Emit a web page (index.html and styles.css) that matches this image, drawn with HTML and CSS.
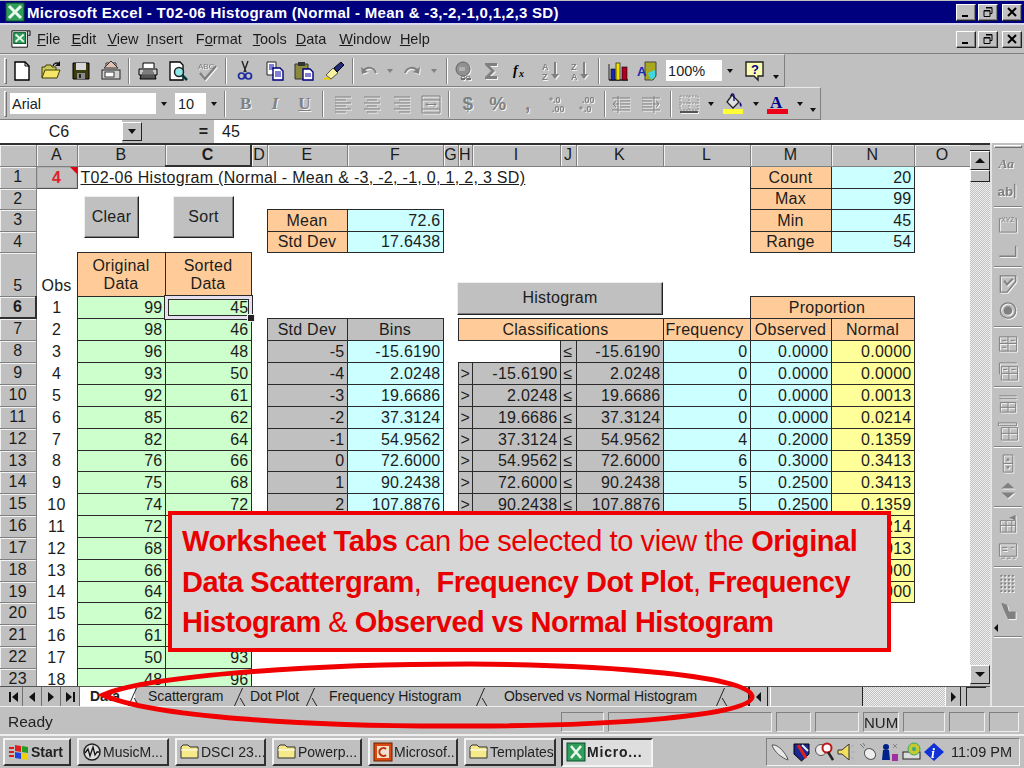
FILE: index.html
```html
<!DOCTYPE html>
<html lang="en">
<head>
<meta charset="utf-8">
<title>Microsoft Excel - T02-06 Histogram</title>
<link rel="stylesheet" href="styles.css">
</head>
<body>
<div class="app">
  <header class="titlebar">
    <svg class="appicon" viewBox="0 0 20 20"><rect x="1" y="1" width="18" height="18" fill="#2f9e5b" stroke="#0b4f2a"/><path d="M4 4l12 12M16 4L4 16" stroke="#e8f8ea" stroke-width="3"/></svg>
    <span class="titletext">Microsoft Excel - T02-06 Histogram (Normal - Mean &amp; -3,-2,-1,0,1,2,3 SD)</span>
    <div class="winbtns">
      <button class="winbtn"><svg viewBox="0 0 14 12"><path d="M3 10h6" stroke="#000" stroke-width="2"/></svg></button>
      <button class="winbtn"><svg viewBox="0 0 14 12"><path d="M5 1.5h6v6H9M3 4.5h6v6H3z" fill="none" stroke="#000"/><path d="M5 2h6M3 5h6" stroke="#000"/></svg></button>
      <button class="winbtn winclose"><svg viewBox="0 0 14 12"><path d="M3 2l8 8M11 2l-8 8" stroke="#000" stroke-width="2"/></svg></button>
    </div>
  </header>

  <nav class="menubar">
    <svg class="docicon" viewBox="0 0 24 22"><path d="M2 2h17v18H2z" fill="#fff" stroke="#000"/><path d="M19 2h3v5h-2" fill="none" stroke="#000"/><rect x="4" y="4" width="13" height="12" fill="#2f9e5b" stroke="#0b4f2a"/><path d="M6 6l9 8M15 6l-9 8" stroke="#e8f8ea" stroke-width="2"/></svg>
    <span class="mi mi-file"><u>F</u>ile</span>
    <span class="mi mi-edit"><u>E</u>dit</span>
    <span class="mi mi-view"><u>V</u>iew</span>
    <span class="mi mi-insert"><u>I</u>nsert</span>
    <span class="mi mi-format">F<u>o</u>rmat</span>
    <span class="mi mi-tools"><u>T</u>ools</span>
    <span class="mi mi-data"><u>D</u>ata</span>
    <span class="mi mi-window"><u>W</u>indow</span>
    <span class="mi mi-help"><u>H</u>elp</span>
    <div class="winbtns">
      <button class="winbtn"><svg viewBox="0 0 14 12"><path d="M3 10h6" stroke="#000" stroke-width="2"/></svg></button>
      <button class="winbtn"><svg viewBox="0 0 14 12"><path d="M5 1.5h6v6H9M3 4.5h6v6H3z" fill="none" stroke="#000"/><path d="M5 2h6M3 5h6" stroke="#000"/></svg></button>
      <button class="winbtn winclose"><svg viewBox="0 0 14 12"><path d="M3 2l8 8M11 2l-8 8" stroke="#000" stroke-width="2"/></svg></button>
    </div>
  </nav>

  <div class="toolrow">
    <div class="toolbar tb-std">
      <i class="grip"></i>
      <span class="tbtn"><svg viewBox="0 0 22 22"><path d="M4 2h10l4 4v14H4z" fill="#fff" stroke="#000" stroke-width="1.4"/><path d="M14 2v4h4" fill="none" stroke="#000"/></svg></span>
      <span class="tbtn"><svg viewBox="0 0 22 22"><path d="M2 18V7h3l1-2h5l1 2h4v3" fill="#c9c95a" stroke="#403c00"/><path d="M2 18l3-8h15l-3 8z" fill="#f5e66a" stroke="#403c00"/><path d="M13 6c1-3 4-4 6-2" fill="none" stroke="#111" stroke-width="1.4"/><path d="M20 1v5h-5z" fill="#111"/></svg></span>
      <span class="tbtn"><svg viewBox="0 0 22 22"><path d="M3 3h16v16H3z" fill="#3c3c10" stroke="#000"/><rect x="6" y="3" width="10" height="7" fill="#d8d8d8"/><rect x="7" y="13" width="8" height="6" fill="#8a8a8a"/><rect x="9" y="14" width="2" height="4" fill="#222"/></svg></span>
      <span class="tbtn"><svg viewBox="0 0 22 22"><path d="M6 8V3h10v5" fill="#eee" stroke="#333"/><path d="M11 1l7 7H4z" fill="#e4c0b0" stroke="#333"/><rect x="2" y="10" width="18" height="9" fill="#d0d0d0" stroke="#222"/><rect x="5" y="12" width="9" height="5" fill="#fff" stroke="#333"/></svg></span>
      <i class="sep"></i>
      <span class="tbtn"><svg viewBox="0 0 22 22"><path d="M6 8V3h11v5" fill="#fff" stroke="#000"/><path d="M2 9h18v6H2z" fill="#c8c8c8" stroke="#000"/><path d="M4 15l-1 4h16l-1-4" fill="#555" stroke="#000"/><path d="M6 11h10M5 13h12" stroke="#333"/></svg></span>
      <span class="tbtn"><svg viewBox="0 0 22 22"><path d="M3 2h10l3 3v15H3z" fill="#fff" stroke="#000" stroke-width="1.3"/><circle cx="12" cy="12" r="4.5" fill="#8fe8e8" stroke="#222" stroke-width="1.5"/><path d="M15 15l5 5" stroke="#003a3a" stroke-width="2.5"/></svg></span>
      <span class="tbtn dis"><svg viewBox="0 0 22 22"><text x="2" y="9" font-size="8" font-family="Liberation Sans" fill="#808080">ABC</text><path d="M4 13l5 6L20 6" fill="none" stroke="#808080" stroke-width="2.4"/></svg></span>
      <i class="sep"></i>
      <span class="tbtn"><svg viewBox="0 0 22 22"><path d="M8 1l4 11M14 1l-4 11" stroke="#222" stroke-width="1.4"/><circle cx="7.5" cy="16" r="3" fill="none" stroke="#1a2aa0" stroke-width="1.7"/><circle cx="14.5" cy="16" r="3" fill="none" stroke="#1a2aa0" stroke-width="1.7"/></svg></span>
      <span class="tbtn"><svg viewBox="0 0 22 22"><path d="M3 2h9v13H3z" fill="#fff" stroke="#222"/><path d="M5 5h5M5 7h5M5 9h5" stroke="#00a"/><path d="M9 8h7l3 3v9H9z" fill="#fff" stroke="#00007a" stroke-width="1.4"/><path d="M11 12h6M11 14h6M11 16h6" stroke="#00a"/></svg></span>
      <span class="tbtn"><svg viewBox="0 0 22 22"><path d="M2 4h13v15H2z" fill="#8a8a3a" stroke="#333"/><rect x="5" y="2" width="7" height="4" fill="#333"/><path d="M10 9h7l3 3v8H10z" fill="#fff" stroke="#00007a" stroke-width="1.4"/><path d="M12 14h6M12 16h6" stroke="#00a"/></svg></span>
      <span class="tbtn"><svg viewBox="0 0 22 22"><path d="M3 15l7-7 5 5-7 6z" fill="#f8f0a0" stroke="#554"/><path d="M11 8l7-6 3 3-7 7z" fill="#222a7a" stroke="#001"/><path d="M1 19l3-1 3 2" stroke="#e8d000" stroke-width="2" fill="none"/></svg></span>
      <i class="sep"></i>
      <span class="tbtn dis narrow"><svg viewBox="0 0 22 22"><path d="M5 11c4-5 11-4 13 2" fill="none" stroke="#808080" stroke-width="2"/><path d="M3 7l1 7 6-2z" fill="#808080"/></svg></span>
      <span class="dd dis"></span>
      <span class="tbtn dis narrow2"><svg viewBox="0 0 22 22"><path d="M17 11c-4-5-11-4-13 2" fill="none" stroke="#808080" stroke-width="2"/><path d="M19 7l-1 7-6-2z" fill="#808080"/></svg></span>
      <span class="dd dis"></span>
      <i class="sep"></i>
      <span class="tbtn dis narrow2"><svg viewBox="0 0 22 22"><circle cx="10" cy="9" r="7" fill="#909090" stroke="#666"/><path d="M6 7h6v4H6z" fill="#b0b0b0"/><path d="M8 19h4M14 19h4" stroke="#707070" stroke-width="2"/><circle cx="10" cy="18" r="2" fill="none" stroke="#707070"/><circle cx="15" cy="18" r="2" fill="none" stroke="#707070"/></svg></span>
      <span class="tbtn dis"><svg viewBox="0 0 22 22"><path d="M5 3h12v3H10l5 5-5 5h7v3H5v-2l6-6-6-6z" fill="#808080"/></svg></span>
      <span class="tbtn"><svg viewBox="0 0 22 22"><text x="3" y="15" font-size="14" font-weight="700" font-style="italic" font-family="Liberation Serif" fill="#000">f</text><text x="9" y="17" font-size="10" font-weight="700" font-style="italic" font-family="Liberation Serif" fill="#000">x</text></svg></span>
      <span class="tbtn dis"><svg viewBox="0 0 22 22"><text x="2" y="10" font-size="9" font-weight="700" font-family="Liberation Sans" fill="#808080">A</text><text x="2" y="20" font-size="9" font-weight="700" font-family="Liberation Sans" fill="#808080">Z</text><path d="M15 2v15" stroke="#808080" stroke-width="2"/><path d="M11 14h8l-4 5z" fill="#808080"/></svg></span>
      <span class="tbtn dis"><svg viewBox="0 0 22 22"><text x="2" y="10" font-size="9" font-weight="700" font-family="Liberation Sans" fill="#808080">Z</text><text x="2" y="20" font-size="9" font-weight="700" font-family="Liberation Sans" fill="#808080">A</text><path d="M15 2v15" stroke="#808080" stroke-width="2"/><path d="M11 14h8l-4 5z" fill="#808080"/></svg></span>
      <i class="sep"></i>
      <span class="tbtn"><svg viewBox="0 0 22 22"><path d="M2 20h19" stroke="#222" stroke-width="1.5"/><path d="M2 4v16" stroke="#222"/><rect x="4" y="9" width="4" height="11" fill="#1a2ab0" stroke="#000" stroke-width=".6"/><rect x="9" y="3" width="4" height="17" fill="#f0e000" stroke="#000" stroke-width=".6"/><rect x="15" y="7" width="5" height="13" fill="#b00020" stroke="#000" stroke-width=".6"/></svg></span>
      <span class="tbtn"><svg viewBox="0 0 22 22"><path d="M9 2h11v14l-3 4H9z" fill="#a8a820" stroke="#444"/><path d="M12 13l7-3v7l-4 3z" fill="#3fd8e0"/><text x="1" y="16" font-size="13" font-weight="700" font-family="Liberation Sans" fill="#1a2ab0">A</text></svg></span>
      <span class="combo combo-zoom">100%<b class="cbtn"></b></span>
      <span class="tbtn helpbtn"><svg viewBox="0 0 22 22"><path d="M2 2h17v14h-5v4l-4-4H2z" fill="#fdfcb0" stroke="#222" stroke-width="1.4"/><text x="7" y="14" font-size="13" font-weight="700" font-family="Liberation Sans" fill="#00008a">?</text></svg></span>
      <span class="more"></span>
    </div>
  </div>

  <div class="toolrow">
    <div class="toolbar tb-fmt">
      <i class="grip"></i>
      <span class="combo combo-font">Arial<b class="cbtn"></b></span>
      <span class="combo combo-size">10<b class="cbtn"></b></span>
      <i class="sep sep-f"></i>
      <span class="tbtn dis gl gl-b">B</span>
      <span class="tbtn dis gl gl-i">I</span>
      <span class="tbtn dis gl gl-u">U</span>
      <i class="sep sep-w"></i>
      <span class="tbtn dis"><svg viewBox="0 0 22 22"><path d="M3 4h16M3 7h11M3 10h16M3 13h11M3 16h16M3 19h11" stroke="#808080"/></svg></span>
      <span class="tbtn dis"><svg viewBox="0 0 22 22"><path d="M3 4h16M6 7h10M3 10h16M6 13h10M3 16h16M6 19h10" stroke="#808080"/></svg></span>
      <span class="tbtn dis"><svg viewBox="0 0 22 22"><path d="M3 4h16M8 7h11M3 10h16M8 13h11M3 16h16M8 19h11" stroke="#808080"/></svg></span>
      <span class="tbtn dis"><svg viewBox="0 0 22 22"><path d="M2 3h18v17H2zM2 7h18M2 16h18" fill="none" stroke="#808080"/><path d="M6 11.5h10M6 11.5l2-2M6 11.5l2 2M16 11.5l-2-2M16 11.5l-2 2" stroke="#808080"/></svg></span>
      <i class="sep sep-n"></i>
      <span class="tbtn wide dis gl gl-m">$</span>
      <span class="tbtn wide dis gl gl-m">%</span>
      <span class="tbtn wide dis gl gl-m">,</span>
      <span class="tbtn wide dis"><svg viewBox="0 0 22 22"><text x="6" y="10" font-size="9" font-weight="700" font-family="Liberation Sans" fill="#808080">.0</text><text x="5" y="19" font-size="9" font-weight="700" font-family="Liberation Sans" fill="#808080">.00</text><path d="M2 6h4M4 4v4" stroke="#808080"/></svg></span>
      <span class="tbtn wide dis"><svg viewBox="0 0 22 22"><text x="5" y="10" font-size="9" font-weight="700" font-family="Liberation Sans" fill="#808080">.00</text><text x="7" y="19" font-size="9" font-weight="700" font-family="Liberation Sans" fill="#808080">.0</text><path d="M2 15h4M4 13v4" stroke="#808080"/></svg></span>
      <i class="sep sep-s"></i>
      <span class="tbtn dis"><svg viewBox="0 0 22 22"><path d="M2 5h18M10 8h10M10 11h10M10 14h10M2 17h18" stroke="#808080"/><path d="M9 11H3M3 11l3-3M3 11l3 3M8 3v17" fill="none" stroke="#808080"/></svg></span>
      <span class="tbtn dis"><svg viewBox="0 0 22 22"><path d="M2 5h18M2 8h10M2 11h10M2 14h10M2 17h18" stroke="#808080"/><path d="M13 11h6M19 11l-3-3M19 11l-3 3M14 3v17" fill="none" stroke="#808080"/></svg></span>
      <i class="sep sep-b"></i>
      <span class="tbtn dis"><svg viewBox="0 0 22 22"><path d="M2 3h18v14H2zM11 3v14M2 10h18" fill="none" stroke="#909090" stroke-dasharray="2 1"/><path d="M2 19h18" stroke="#555" stroke-width="2"/></svg></span>
      <span class="dd"></span>
      <span class="tbtn"><svg viewBox="0 0 22 22"><path d="M9 2l7 7-6 6-6-6z" fill="#e0e0e0" stroke="#222" stroke-width="1.3"/><path d="M8 3c0-3 3-3 3 0v5" fill="none" stroke="#00007a" stroke-width="1.2"/><path d="M17 9c2 2 2 4 1 5-1-1-2-3-1-5z" fill="#00007a"/><rect x="0" y="16" width="20" height="5" fill="#ffff33"/></svg></span>
      <span class="dd"></span>
      <span class="tbtn"><svg viewBox="0 0 22 22"><text x="3" y="15" font-size="17" font-weight="700" font-family="Liberation Serif" fill="#00008a">A</text><rect x="0" y="16" width="21" height="5" fill="#f00018"/></svg></span>
      <span class="dd"></span>
      <span class="more more-end"></span>
    </div>
  </div>

  <div class="formula">
    <div class="namebox">C6</div>
    <b class="namedrop"></b>
    <div class="fx-eq">=</div>
    <div class="fx-input">45</div>
  </div>

  <div class="work">
    <div class="leftcol">
      <div class="sheetrow">
        <div class="sheetclip">
          <table class="sheet">
            <colgroup>
              <col class="c-rh"><col class="c-a"><col class="c-b"><col class="c-c"><col class="c-d"><col class="c-e"><col class="c-f"><col class="c-g"><col class="c-h"><col class="c-i"><col class="c-j"><col class="c-k"><col class="c-l"><col class="c-m"><col class="c-n"><col class="c-o">
            </colgroup>
            <thead>
              <tr class="hd"><th></th><th>A</th><th>B</th><th class="act">C</th><th>D</th><th>E</th><th>F</th><th>G</th><th>H</th><th>I</th><th>J</th><th>K</th><th>L</th><th>M</th><th>N</th><th>O</th></tr>
            </thead>
            <tbody>
              <tr class="h22"><th>1</th><td class="note">4</td><td colspan="11" class="ttl"><u>T02-06 Histogram (Normal - Mean &amp; -3, -2, -1, 0, 1, 2, 3 SD)</u></td><td class="or c">Count</td><td class="cy r">20</td><td></td></tr>
              <tr class="h21"><th>2</th><td colspan="12"></td><td class="or c">Max</td><td class="cy r">99</td><td></td></tr>
              <tr class="h22"><th>3</th><td colspan="4"></td><td class="or c">Mean</td><td class="cy r">72.6</td><td colspan="6"></td><td class="or c">Min</td><td class="cy r">45</td><td></td></tr>
              <tr class="h21"><th>4</th><td colspan="4"></td><td class="or c">Std Dev</td><td class="cy r">17.6438</td><td colspan="6"></td><td class="or c">Range</td><td class="cy r">54</td><td></td></tr>
              <tr class="h44"><th class="bt">5</th><td class="c bt">Obs</td><td class="or c">Original<br>Data</td><td class="or c">Sorted<br>Data</td></tr>
              <tr class="h22"><th class="act">6</th><td class="c">1</td><td class="gr r">99</td><td class="gr r">45</td><td colspan="9"></td><td colspan="2" class="or c pr12">Proportion</td></tr>
              <tr class="h22"><th>7</th><td class="c">2</td><td class="gr r">98</td><td class="gr r">46</td><td></td><td class="gy c">Std Dev</td><td class="gy c">Bins</td><td></td><td colspan="4" class="or c pr12">Classifications</td><td class="or c pr5">Frequency</td><td class="or c">Observed</td><td class="or c">Normal</td></tr>
              <tr class="h22"><th>8</th><td class="c">3</td><td class="gr r">96</td><td class="gr r">48</td><td></td><td class="gy r">-5</td><td class="cy r">-15.6190</td><td></td><td colspan="2"></td><td class="gy c">≤</td><td class="gy r">-15.6190</td><td class="cy r">0</td><td class="cy r">0.0000</td><td class="yl r">0.0000</td></tr>
              <tr class="h22"><th>9</th><td class="c">4</td><td class="gr r">93</td><td class="gr r">50</td><td></td><td class="gy r">-4</td><td class="cy r">2.0248</td><td></td><td class="gy c">&gt;</td><td class="gy r">-15.6190</td><td class="gy c">≤</td><td class="gy r">2.0248</td><td class="cy r">0</td><td class="cy r">0.0000</td><td class="yl r">0.0000</td></tr>
              <tr class="h22"><th>10</th><td class="c">5</td><td class="gr r">92</td><td class="gr r">61</td><td></td><td class="gy r">-3</td><td class="cy r">19.6686</td><td></td><td class="gy c">&gt;</td><td class="gy r">2.0248</td><td class="gy c">≤</td><td class="gy r">19.6686</td><td class="cy r">0</td><td class="cy r">0.0000</td><td class="yl r">0.0013</td></tr>
              <tr class="h22"><th>11</th><td class="c">6</td><td class="gr r">85</td><td class="gr r">62</td><td></td><td class="gy r">-2</td><td class="cy r">37.3124</td><td></td><td class="gy c">&gt;</td><td class="gy r">19.6686</td><td class="gy c">≤</td><td class="gy r">37.3124</td><td class="cy r">0</td><td class="cy r">0.0000</td><td class="yl r">0.0214</td></tr>
              <tr class="h22"><th>12</th><td class="c">7</td><td class="gr r">82</td><td class="gr r">64</td><td></td><td class="gy r">-1</td><td class="cy r">54.9562</td><td></td><td class="gy c">&gt;</td><td class="gy r">37.3124</td><td class="gy c">≤</td><td class="gy r">54.9562</td><td class="cy r">4</td><td class="cy r">0.2000</td><td class="yl r">0.1359</td></tr>
              <tr class="h21"><th>13</th><td class="c">8</td><td class="gr r">76</td><td class="gr r">66</td><td></td><td class="gy r">0</td><td class="cy r">72.6000</td><td></td><td class="gy c">&gt;</td><td class="gy r">54.9562</td><td class="gy c">≤</td><td class="gy r">72.6000</td><td class="cy r">6</td><td class="cy r">0.3000</td><td class="yl r">0.3413</td></tr>
              <tr class="h22"><th>14</th><td class="c">9</td><td class="gr r">75</td><td class="gr r">68</td><td></td><td class="gy r">1</td><td class="cy r">90.2438</td><td></td><td class="gy c">&gt;</td><td class="gy r">72.6000</td><td class="gy c">≤</td><td class="gy r">90.2438</td><td class="cy r">5</td><td class="cy r">0.2500</td><td class="yl r">0.3413</td></tr>
              <tr class="h22"><th>15</th><td class="c">10</td><td class="gr r">74</td><td class="gr r">72</td><td></td><td class="gy r">2</td><td class="cy r">107.8876</td><td></td><td class="gy c">&gt;</td><td class="gy r">90.2438</td><td class="gy c">≤</td><td class="gy r">107.8876</td><td class="cy r">5</td><td class="cy r">0.2500</td><td class="yl r">0.1359</td></tr>
              <tr class="h22"><th>16</th><td class="c">11</td><td class="gr r">72</td><td class="gr r"></td><td></td><td class="gy"></td><td class="cy"></td><td></td><td class="gy"></td><td class="gy"></td><td class="gy"></td><td class="gy"></td><td class="cy"></td><td class="cy"></td><td class="yl r">0.0214</td></tr>
              <tr class="h22"><th>17</th><td class="c">12</td><td class="gr r">68</td><td class="gr r"></td><td></td><td class="gy"></td><td class="cy"></td><td></td><td class="gy"></td><td class="gy"></td><td class="gy"></td><td class="gy"></td><td class="cy"></td><td class="cy"></td><td class="yl r">0.0013</td></tr>
              <tr class="h22"><th>18</th><td class="c">13</td><td class="gr r">66</td><td class="gr r"></td><td></td><td class="gy"></td><td class="cy"></td><td></td><td class="gy"></td><td class="gy"></td><td class="gy"></td><td class="gy"></td><td class="cy"></td><td class="cy"></td><td class="yl r">0.0000</td></tr>
              <tr class="h21"><th>19</th><td class="c">14</td><td class="gr r">64</td><td class="gr r"></td><td></td><td></td><td></td><td></td><td class="gy"></td><td class="gy"></td><td colspan="2"></td><td class="cy"></td><td class="cy"></td><td class="yl r">0.0000</td></tr>
              <tr class="h22"><th>20</th><td class="c">15</td><td class="gr r">62</td><td class="gr r"></td></tr>
              <tr class="h22"><th>21</th><td class="c">16</td><td class="gr r">61</td><td class="gr r"></td></tr>
              <tr class="h22"><th>22</th><td class="c">17</td><td class="gr r">50</td><td class="gr r">93</td></tr>
              <tr class="h22"><th>23</th><td class="c">18</td><td class="gr r">48</td><td class="gr r">96</td></tr>
            </tbody>
          </table>
          <div class="sel"></div>
          <button class="xlbtn xl-clear">Clear</button>
          <button class="xlbtn xl-sort">Sort</button>
          <button class="xlbtn xl-hist">Histogram</button>
        </div>
        <div class="vscroll">
          <i class="split"></i>
          <b class="sbtn sbtn-up"></b>
          <i class="sthumb"></i>
          <i class="strack"></i>
          <b class="sbtn sbtn-down"></b>
        </div>
      </div>
      <div class="tabbar">
        <span class="nav nav-first"></span><span class="nav nav-prev"></span><span class="nav nav-next"></span><span class="nav nav-last"></span>
        <span class="tab tab-data">Data</span>
        <span class="tab tab-sc">Scattergram</span>
        <span class="tab tab-dot">Dot Plot</span>
        <span class="tab tab-fr">Frequency Histogram</span>
        <span class="tab tab-ob">Observed vs Normal Histogram</span>
        <div class="hscroll">
          <b class="hbtn hbtn-l"></b>
          <i class="hthumb"></i>
          <i class="htrack"></i>
          <b class="hbtn hbtn-r"></b>
        </div>
        <i class="corner"></i>
      </div>
    </div>
    <aside class="toolbox">
      <i class="vgrip"></i>
      <span class="vb dis"><svg viewBox="0 0 22 22"><text x="1" y="16" font-size="14" font-style="italic" font-weight="700" font-family="Liberation Serif" fill="#808080">Aa</text></svg></span>
      <span class="vb dis"><svg viewBox="0 0 22 22"><text x="0" y="17" font-size="14" font-family="Liberation Sans" font-weight="700" fill="#808080">ab</text><path d="M18 4v15" stroke="#808080" stroke-width="1.5"/></svg></span>
      <i class="vsep"></i>
      <span class="vb dis"><svg viewBox="0 0 22 22"><path d="M2 6v14h18V6h-2M2 6h2" fill="none" stroke="#808080"/><text x="4" y="9" font-size="7" font-family="Liberation Sans" fill="#808080">XYZ</text></svg></span>
      <span class="vb dis"><svg viewBox="0 0 22 22"><path d="M2 17h17V6" fill="none" stroke="#808080" stroke-width="1.5"/></svg></span>
      <i class="vsep"></i>
      <span class="vb dis"><svg viewBox="0 0 22 22"><path d="M3 3h16v6l-9 11H3z" fill="none" stroke="#808080" stroke-width="1.5"/><path d="M7 8l3 4 6-6" fill="none" stroke="#808080" stroke-width="2"/></svg></span>
      <span class="vb dis"><svg viewBox="0 0 22 22"><circle cx="11" cy="11" r="8" fill="none" stroke="#808080" stroke-width="1.5"/><circle cx="11" cy="11" r="4.5" fill="#808080"/></svg></span>
      <i class="vsep"></i>
      <span class="vb dis"><svg viewBox="0 0 22 22"><path d="M2 4h18v15H2zM11 4v15M2 11h18M5 8h4M14 8h4M5 15h4" fill="none" stroke="#808080"/></svg></span>
      <span class="vb dis"><svg viewBox="0 0 22 22"><path d="M2 3h18M4 7h17v14H4zM12 7v14M4 14h17M6 10h4M15 10h4" fill="none" stroke="#808080"/><path d="M2 3v12" stroke="#808080"/></svg></span>
      <i class="vsep"></i>
      <span class="vb dis"><svg viewBox="0 0 22 22"><path d="M2 3h18M2 6h18M3 10h16v10H3zM11 10v10M3 15h16" fill="none" stroke="#808080"/></svg></span>
      <span class="vb dis"><svg viewBox="0 0 22 22"><path d="M1 3h19v3H1zM4 8h17v13H4zM12 8v13M4 14h17" fill="none" stroke="#808080"/></svg></span>
      <i class="vsep"></i>
      <span class="vb dis"><svg viewBox="0 0 22 22"><path d="M6 2h10v18H6zM6 11h10" fill="none" stroke="#808080"/><path d="M9 8l2-3 2 3zM9 14h4l-2 3z" fill="#808080"/></svg></span>
      <span class="vb dis"><svg viewBox="0 0 22 22"><path d="M4 9l7-6 7 6zM4 13h14l-7 6z" fill="#808080"/></svg></span>
      <i class="vsep"></i>
      <span class="vb dis"><svg viewBox="0 0 22 22"><path d="M3 8h16v12H3zM3 13h16M9 8v12M15 8v12" fill="none" stroke="#808080"/><path d="M12 5l7-3v6z" fill="#808080"/></svg></span>
      <span class="vb dis"><svg viewBox="0 0 22 22"><path d="M2 4h18v13H2zM4 19h4M10 19h4M16 19h3M5 8h5M5 11h5M14 8h3" fill="none" stroke="#808080"/></svg></span>
      <i class="vsep"></i>
      <span class="vb dis"><svg viewBox="0 0 22 22"><path d="M3 3h16M3 7h16M3 11h16M3 15h16M3 19h16" stroke="#808080" stroke-width="2" stroke-dasharray="2 2"/></svg></span>
      <span class="vb dis"><svg viewBox="0 0 22 22"><path d="M4 3l6 2 2 7h7v8h-8L6 9z" fill="#808080"/></svg></span>
      <span class="vmore"></span>
      <i class="vsep"></i>
    </aside>
  </div>

  <div class="statusbar">
    <span class="ready">Ready</span>
    <span class="pn p1"></span><span class="pn p2"></span><span class="pn p3"></span><span class="pn p4"></span><span class="pn p5">NUM</span><span class="pn p6"></span><span class="pn p7"></span><span class="pn p8"></span>
  </div>

  <footer class="taskbar">
    <span class="tk tk-start"><svg viewBox="0 0 22 20"><path d="M7 3l6 1v6l-6-1z" fill="#e02020"/><path d="M14 4l6 1v6l-6-1z" fill="#20a020"/><path d="M7 10l6 1v6l-6-1z" fill="#2040e0"/><path d="M14 11l6 1v6l-6-1z" fill="#f0d000"/><path d="M1 6h5M1 10h5M1 14h5" stroke="#d02020" stroke-width="2"/></svg><b>Start</b></span>
    <span class="tk tk-a"><svg viewBox="0 0 20 20"><circle cx="10" cy="10" r="8" fill="#ddd" stroke="#222" stroke-width="1.5"/><path d="M3 11l3-4 2 7 3-9 2 8 2-3h2" fill="none" stroke="#111" stroke-width="1.3"/></svg>MusicM...</span>
    <span class="tk tk-b"><svg viewBox="0 0 20 20"><path d="M1 16V5l2-2h5l2 2h8v11z" fill="#f5e98a" stroke="#333"/><path d="M1 8h17" stroke="#fff"/></svg>DSCI 23...</span>
    <span class="tk tk-c"><svg viewBox="0 0 20 20"><path d="M1 16V5l2-2h5l2 2h8v11z" fill="#f5e98a" stroke="#333"/><path d="M1 8h17" stroke="#fff"/></svg>Powerp...</span>
    <span class="tk tk-d"><svg viewBox="0 0 20 20"><rect x="1" y="1" width="18" height="18" fill="#d84a10" stroke="#6a2000"/><rect x="4" y="4" width="12" height="12" fill="#f4e0d0"/><path d="M13 7a4 4 0 1 0 0 6" fill="none" stroke="#c03000" stroke-width="2"/></svg>Microsof...</span>
    <span class="tk tk-e"><svg viewBox="0 0 20 20"><path d="M1 16V5l2-2h5l2 2h8v11z" fill="#f5e98a" stroke="#333"/><path d="M1 8h17" stroke="#fff"/></svg>Templates</span>
    <span class="tk tk-f"><svg viewBox="0 0 20 20"><rect x="1" y="1" width="18" height="18" fill="#2f9e5b" stroke="#0b4f2a"/><path d="M5 4l10 12M15 4L5 16" stroke="#e8f8ea" stroke-width="2.6"/></svg><b>Micro...</b></span>
    <div class="tray">
      <svg viewBox="0 0 20 20"><path d="M2 3c5-1 11 5 15 12l1 3c-6-2-14-8-16-15z" fill="#e8e8e8" stroke="#555"/></svg>
      <svg viewBox="0 0 20 20"><path d="M2 2h15v10l-7.500 7L2 12z" fill="#1a2a90" stroke="#001"/><path d="M6 3l8 13" stroke="#e02020" stroke-width="3"/><path d="M10 3l6 6" stroke="#eee" stroke-width="2"/></svg>
      <svg viewBox="0 0 20 20"><circle cx="7" cy="8" r="5.500" fill="#eee" stroke="#555"/><circle cx="13" cy="6" r="4.500" fill="#fff" stroke="#c01818" stroke-width="2"/><path d="M14 10l5 8" stroke="#222" stroke-width="2.500"/></svg>
      <svg viewBox="0 0 20 20"><path d="M2 8h4l7-6v16l-7-6H2z" fill="#f4e060" stroke="#333"/><path d="M15 5l3-2M15 10h4M15 15l3 2" stroke="#aaa"/></svg>
      <svg viewBox="0 0 20 20"><ellipse cx="12" cy="12" rx="6" ry="5" transform="rotate(40 12 12)" fill="#eee" stroke="#555"/><path d="M2 2l4 4M5 1l2 3" stroke="#777"/></svg>
      <svg viewBox="0 0 20 20"><circle cx="6" cy="5" r="3" fill="#00208a"/><path d="M3 8h6l1 10H2z" fill="#00208a"/><path d="M13 2l4 4M17 2l-4 4" stroke="#888"/><rect x="12" y="12" width="6" height="7" fill="#a030a0"/></svg>
      <svg viewBox="0 0 20 20"><rect x="1" y="10" width="17" height="7" fill="#ddd" stroke="#222"/><circle cx="12" cy="7" r="6" fill="#c8c830" stroke="#3a6"/><circle cx="12" cy="7" r="2" fill="#3a8"/></svg>
      <svg viewBox="0 0 20 20"><path d="M0 10l10-9 10 9-10 9z" fill="#1030d8"/><text x="7" y="16" font-size="14" font-weight="700" font-style="italic" font-family="Liberation Serif" fill="#fff">i</text></svg>
      <span class="clock">11:09 PM</span>
    </div>
  </footer>

  <div class="callout">
    <p><b>Worksheet Tabs</b> can be selected to view the <b>Original</b></p>
    <p class="tight"><b>Data Scattergram</b>,&nbsp; <b>Frequency Dot Plot</b>, <b>Frequency</b></p>
    <p class="tight"><b>Histogram</b> &amp; <b>Observed vs Normal Histogram</b></p>
  </div>
  <svg class="ring" viewBox="0 0 1024 768"><path d="M103 695C140 678 290 664 470 664C610 665 753 676 752 697C751 716 610 726 470 726C300 727 150 716 103 695Z" fill="none" stroke="#f00000" stroke-width="5"/></svg>
</div>
</body>
</html>
```
FILE: styles.css
```css
* { box-sizing: border-box; }
html, body { margin: 0; padding: 0; }
body { width: 1024px; height: 768px; overflow: hidden; background: #c0c0c0; font-family: "Liberation Sans", Arial, sans-serif; font-size: 16px; color: #1c1c1c; }
button { font-family: inherit; padding: 0; margin: 0; }
svg { display: block; }
.app { position: relative; width: 1024px; height: 768px; display: flex; flex-direction: column; filter: blur(.3px); }

/* title bar */
.titlebar { height: 25px; flex: none; background: #00007f; border-bottom: 2px solid #d8d8ee; border-top: 1px solid #c0c0c0; display: flex; align-items: center; padding-left: 5px; }
.appicon { width: 20px; height: 20px; flex: none; }
.titletext { margin-left: 2px; color: #fff; font-weight: 700; font-size: 15px; letter-spacing: .3px; white-space: nowrap; }
.winbtns { margin-left: auto; margin-right: 2px; display: flex; gap: 2px; }
.winbtn { width: 20px; height: 17px; background: #c0c0c0; border: 1px solid; border-color: #fff #222 #222 #fff; box-shadow: inset -1px -1px 0 #808080; display: flex; align-items: center; justify-content: center; }
.winbtn svg { width: 14px; height: 12px; }
.winbtn.winclose { margin-left: 2px; }

/* menu */
.menubar { height: 29px; flex: none; display: flex; align-items: center; padding-left: 10px; font-size: 14.5px; border-bottom: 1px solid #808080; position: relative; }
.docicon { width: 22px; height: 20px; flex: none; }
.mi { color: #1c1c1c; white-space: nowrap; }
.mi-file { margin-left: 5px; }
.mi-edit { margin-left: 11px; }
.mi-view { margin-left: 11px; }
.mi-insert { margin-left: 8px; }
.mi-format { margin-left: 13px; }
.mi-tools { margin-left: 11px; }
.mi-data { margin-left: 9px; }
.mi-window { margin-left: 13px; }
.mi-help { margin-left: 9px; }

/* toolbars */
.toolrow { height: 33px; flex: none; background: #c0c0c0; }
.toolbar { height: 33px; display: flex; align-items: center; padding-left: 4px; background: #c0c0c0; border-top: 1px solid #e8e8e8; border-right: 1px solid #808080; border-bottom: 1px solid #808080; }
.tb-std { width: 785px; }
.tb-fmt { width: 821px; }
.grip { flex: none; width: 3px; height: 26px; background: #c0c0c0; border: 1px solid; border-color: #fff #707070 #707070 #fff; }
.tbtn { flex: none; width: 29.6px; height: 24px; display: flex; align-items: center; justify-content: center; }
.tbtn svg { width: 22px; height: 22px; }
.narrow { width: 24px; }
.narrow2 { width: 26px; }
.helpbtn { width: 36px; }
.dis svg { filter: drop-shadow(1px 1px 0 #f4f4f4); }
.sep { flex: none; width: 2px; height: 26px; margin: 0 3px; border-left: 1px solid #808080; border-right: 1px solid #fff; }
.sep-f { margin: 0 5px 0 3px; }
.sep-w { margin: 0 4px 0 3px; }
.sep-n { margin: 0 3px 0 2px; }
.sep-s { margin: 0 1px; }
.sep-b { margin: 0 3px 0 4px; }
.dd { flex: none; width: 18px; display: flex; justify-content: center; }
.dd::before { content: ""; border: 3.5px solid transparent; border-top: 4px solid #111; border-bottom: 0; }
.dd.dis::before { border-top-color: #808080; }
.tb-fmt .dd { width: 15px; }
.more { flex: none; width: 8px; height: 10px; margin-top: 10px; position: relative; }
.more::before { content: ""; position: absolute; left: 0; top: 4px; border: 3.5px solid transparent; border-top: 4px solid #111; border-bottom: 0; }
.more-end { margin-left: 2px; }
.combo { flex: none; background: #fff; height: 21px; display: flex; align-items: center; padding-left: 2px; font-size: 14.5px; position: relative; color: #222; }
.cbtn { position: absolute; right: 0; top: 0; bottom: 0; width: 15px; background: #c0c0c0; display: flex; align-items: center; justify-content: center; }
.cbtn::before { content: ""; border: 3.5px solid transparent; border-top: 4px solid #111; border-bottom: 0; }
.combo-zoom { width: 71px; margin-left: 4px; }
.combo-font { width: 161px; margin-left: 3px; }
.combo-size { width: 46px; margin-left: 4px; padding-left: 3px; }
.gl { color: #808080; font-weight: 700; font-size: 17px; text-shadow: 1px 1px 0 #f4f4f4; }
.gl-b { font-family: "Liberation Serif", serif; }
.gl-i { font-family: "Liberation Serif", serif; font-style: italic; }
.gl-u { font-family: "Liberation Serif", serif; text-decoration: underline; }
.gl-m { font-size: 19px; }
.tb-fmt .tbtn { width: 29.4px; }
.tb-fmt .tbtn.wide { width: 30px; }

/* formula bar */
.formula { height: 23px; flex: none; display: flex; background: #c0c0c0; }
.namebox { width: 122px; background: #fff; text-align: center; line-height: 23px; padding-right: 4px; }
.namedrop { width: 20px; height: 19px; margin-top: 2px; background: #c0c0c0; border: 1px solid; border-color: #fff #222 #222 #fff; display: flex; align-items: center; justify-content: center; }
.namedrop::before { content: ""; border: 4px solid transparent; border-top: 5px solid #111; border-bottom: 0; }
.fx-eq { width: 72px; text-align: right; padding-right: 6px; line-height: 23px; font-weight: 700; }
.fx-input { flex: 1; background: #fff; line-height: 23px; padding-left: 8px; }

/* work area */
.work { height: 563px; flex: none; display: flex; }
.leftcol { width: 990px; flex: none; display: flex; flex-direction: column; }
.sheetrow { height: 543px; flex: none; display: flex; }
.sheetclip { width: 970px; height: 543px; overflow: hidden; position: relative; background: #fff; border-top: 2px solid #303030; }
.sheet { table-layout: fixed; width: 970px; border-collapse: collapse; font-size: 16px; letter-spacing: .25px; }
.c-rh { width: 36px; } .c-a { width: 41px; } .c-b { width: 88px; } .c-c { width: 86px; } .c-d { width: 16px; } .c-e { width: 80px; } .c-f { width: 96px; } .c-g { width: 15px; } .c-h { width: 14px; } .c-i { width: 88px; } .c-j { width: 16px; } .c-k { width: 87px; } .c-l { width: 87px; } .c-m { width: 81px; } .c-n { width: 83px; } .c-o { width: 56px; }
.sheet td, .sheet th { padding: 1px 2px 0; font-weight: 400; white-space: nowrap; line-height: 18px; overflow: visible; }
.hd { height: 21px; }
.h22 { height: 22px; }
.h21 { height: 21px; }
.h44 { height: 44px; }
.sheet th { background: #c0c0c0; text-align: center; box-shadow: inset 1px 1px 0 #f2f2f2; border-right: 1px solid #808080; border-bottom: 1px solid #808080; padding: 0; }
.sheet .act { font-weight: 700; border-right: 2px solid #303030; border-bottom: 2px solid #303030; }
.sheet tbody th.bt, .sheet td.bt { vertical-align: bottom; padding-bottom: 1px; }
.c { text-align: center; }
.r { text-align: right; }
.sheet .or, .sheet .cy, .sheet .gr, .sheet .gy, .sheet .yl { border: 1px solid #2a2a2a; }
.or { background: #ffcc99; }
.cy { background: #ccffff; }
.gr { background: #ccffcc; }
.gy { background: #c0c0c0; }
.yl { background: #ffff99; }
.sheet .pr12 { padding-right: 12px; }
.sheet .pr5 { padding-right: 6px; }
.sheet td.note { position: relative; background: #c0c0c0; color: #e0202a; font-weight: 700; text-align: center; box-shadow: inset 0 0 0 1px #b0b0b0; border-right: 1px solid #505050; border-bottom: 1px solid #505050; }
.note::after { content: ""; position: absolute; right: 0; top: 0; border-top: 7px solid #e00010; border-left: 7px solid transparent; }
.sheet td.ttl { padding-left: 3px; letter-spacing: .3px; }
.sel { position: absolute; left: 165px; top: 151px; width: 87px; height: 23px; border: 3px solid #e6dff0; outline: 1px solid #2a2a2a; box-shadow: inset 0 0 0 1px #2a2a2a; }
.sel::after { content: ""; position: absolute; right: -6px; bottom: -6px; width: 6px; height: 6px; background: #222; border: 1px solid #eee; }
.xlbtn { position: absolute; background: #c0c0c0; color: #1c1c1c; font-size: 16px; letter-spacing: .25px; border: 1px solid; border-color: #eee #222 #222 #eee; box-shadow: inset -1px -1px 0 #808080; }
.xl-clear { left: 84px; top: 51px; width: 55px; height: 42px; }
.xl-sort { left: 173px; top: 51px; width: 61px; height: 42px; }
.xl-hist { left: 457px; top: 137px; width: 206px; height: 33px; padding-bottom: 2px; }

/* scrollbars */
.vscroll { width: 20px; flex: none; display: flex; flex-direction: column; background: #c0c0c0; border-top: 2px solid #303030; }
.split { height: 6px; flex: none; background: #c0c0c0; border-bottom: 1px solid #222; }
.sbtn { flex: none; height: 19px; background: #c0c0c0; border: 1px solid; border-color: #fff #222 #222 #fff; display: flex; align-items: center; justify-content: center; }
.sbtn-up::before { content: ""; border: 5px solid transparent; border-bottom: 5px solid #111; border-top: 0; }
.sbtn-down::before { content: ""; border: 5px solid transparent; border-top: 5px solid #111; border-bottom: 0; }
.sthumb { height: 12px; flex: none; background: #c0c0c0; border: 1px solid; border-color: #fff #222 #222 #fff; }
.strack { flex: 1; background: repeating-conic-gradient(#c0c0c0 0 25%, #efefef 0 50%) 0 0 / 2px 2px; }
.sbtn-down { margin-bottom: 2px; }

/* tabs */
.tabbar { height: 20px; flex: none; display: flex; align-items: stretch; background: #c0c0c0; font-size: 14px; letter-spacing: -.08px; padding-left: 4px; border-top: 1px solid #555; position: relative; }
.nav { width: 19px; flex: none; display: flex; align-items: center; justify-content: center; border-right: 1px solid #707070; gap: 1px; }
.nav::before { content: ""; border: 5px solid transparent; }
.nav-first::before, .nav-prev::before { border-left: 0; border-right: 6px solid #111; }
.nav-next::before, .nav-last::before { border-right: 0; border-left: 6px solid #111; }
.nav-first::after, .nav-last::after { content: ""; width: 2px; height: 10px; background: #111; }
.nav-first { flex-direction: row-reverse; }
.tab { position: relative; flex: none; line-height: 18px; white-space: nowrap; color: #1c1c1c; }
.tab::after { content: ""; position: absolute; right: 2px; top: 1px; bottom: 0; width: 1px; background: #222; transform: skewX(-24deg); }
.tab::before { content: ""; position: absolute; right: -2px; height: 8px; bottom: 0; width: 1px; background: #222; transform: skewX(30deg); }
.tab-data { width: 55px; padding-left: 10px; background: #fff; font-weight: 700; }
.tab-sc { width: 106px; padding-left: 13px; }
.tab-dot { width: 72px; padding-left: 9px; }
.tab-fr { width: 170px; padding-left: 16px; }
.tab-ob { width: 240px; padding-left: 21px; }
.hscroll { position: absolute; left: 748px; top: 0; bottom: 0; width: 222px; display: flex; border-left: 2px solid #222; }
.hbtn { width: 18px; flex: none; background: #c0c0c0; display: flex; align-items: center; justify-content: center; border-right: 1px solid #222; }
.hbtn-l::before { content: ""; border: 5px solid transparent; border-left: 0; border-right: 5px solid #111; }
.hbtn-r { width: 16px; border-right: 1px solid #222; border-left: 1px solid #fff; margin-right: 9px; }
.hbtn-r::before { content: ""; border: 5px solid transparent; border-right: 0; border-left: 5px solid #111; }
.hthumb { width: 93px; flex: none; margin-left: 2px; background: #c0c0c0; border-right: 1px solid #222; border-left: 1px solid #fff; }
.htrack { flex: 1; background: repeating-conic-gradient(#c0c0c0 0 25%, #efefef 0 50%) 0 0 / 2px 2px; }
.corner { position: absolute; left: 966px; top: 0; bottom: 0; width: 20px; border-left: 1px solid #222; border-top: 1px solid #222; }

/* toolbox */
.toolbox { width: 34px; flex: none; background: #c0c0c0; display: flex; flex-direction: column; align-items: center; padding-top: 2px; border-left: 2px solid #e4e4e4; }
.vgrip { width: 28px; height: 3px; flex: none; margin-bottom: 2px; background: #c0c0c0; border: 1px solid; border-color: #fff #707070 #707070 #fff; }
.vb { flex: none; height: 21px; width: 22px; margin: 3px 0; }
.vb svg { width: 22px; height: 21px; }
.vsep { flex: none; width: 28px; height: 2px; margin: 2px 0; border-top: 1px solid #808080; border-bottom: 1px solid #fff; }
.vmore { flex: none; width: 28px; height: 10px; position: relative; }
.vmore::before { content: ""; position: absolute; left: 0; top: 0; border: 4px solid transparent; border-left: 0; border-right: 4px solid #111; }

/* status bar */
.statusbar { height: 29px; flex: none; display: flex; align-items: center; padding-top: 2px; padding-left: 8px; position: relative; border-top: 1px solid #eee; border-bottom: 1px solid #eee; }
.ready { width: 553px; flex: none; font-size: 15.5px; color: #222; }
.pn { flex: none; height: 20px; font-size: 15px; text-align: center; line-height: 19px; color: #222; margin-left: 4px; border: 1px solid; border-color: #808080 #f0f0f0 #f0f0f0 #808080; }
.p1 { width: 43px; margin-left: 0; } .p2 { width: 164px; } .p3 { width: 35px; } .p4 { width: 44px; } .p5 { width: 36px; } .p6 { width: 42px; } .p7 { width: 36px; } .p8 { width: 30px; }

/* taskbar */
.taskbar { height: 33px; flex: 1; display: flex; align-items: center; padding-left: 3px; gap: 6px; background: #c0c0c0; border-top: 1px solid #eee; font-size: 14px; }
.tk { flex: none; height: 28px; display: flex; align-items: center; gap: 1px; padding-left: 3px; border: 2px solid; border-color: #f4f4f4 #303030 #303030 #f4f4f4; color: #222; white-space: nowrap; overflow: hidden; }
.tk svg { width: 20px; height: 20px; flex: none; }
.tk-start { width: 68px; }
.tk-start svg { width: 22px; }
.tk-a { width: 92px; }
.tk-b { width: 91px; }
.tk-c { width: 90px; }
.tk-d { width: 90px; }
.tk-e { width: 92px; }
.tk-f { width: 92px; height: 29px; border-color: #303030 #f4f4f4 #f4f4f4 #303030; background: #dedede; margin-left: -1px; letter-spacing: .8px; }
.tray { margin-left: auto; margin-right: 4px; width: 254px; height: 28px; display: flex; align-items: center; gap: 2px; padding-left: 3px; border: 1px solid; border-color: #808080 #f4f4f4 #f4f4f4 #808080; }
.tray svg { width: 20px; height: 20px; flex: none; }
.clock { margin-left: auto; margin-right: 7px; font-size: 14.5px; color: #222; white-space: nowrap; }

/* overlays */
.callout { position: absolute; left: 168px; top: 511px; width: 723px; height: 141px; background: #d6d6d6; border: 4px solid #f00000; padding: 6px 0 0 10px; color: #e80000; font-size: 29px; letter-spacing: -.42px; }
.callout p { margin: 0; height: 40.500px; line-height: 40.500px; white-space: nowrap; }
.callout .tight { letter-spacing: -.52px; }
.ring { position: absolute; left: 0; top: 0; width: 1024px; height: 768px; pointer-events: none; }
```
